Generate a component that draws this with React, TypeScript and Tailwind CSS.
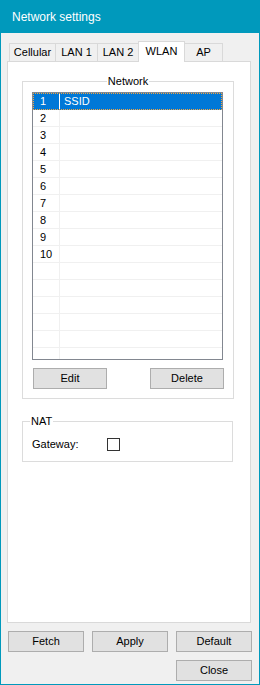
import React from "react";

const rows = ["1", "2", "3", "4", "5", "6", "7", "8", "9", "10", "", "", "", "", "", ""];

function Btn({ children, className = "" }: { children: React.ReactNode; className?: string }) {
  return (
    <div
      className={
        "h-[21px] w-[74px] bg-[#e1e1e1] border border-[#adadad] flex items-center justify-center leading-none " +
        className
      }
    >
      {children}
    </div>
  );
}

const tabs = [
  { label: "Cellular", w: "w-[47px]" },
  { label: "LAN 1", w: "w-[43px]" },
  { label: "LAN 2", w: "w-[42px]" },
  { label: "WLAN", w: "w-[47px]", sel: true },
  { label: "AP", w: "w-[39px]" },
];

export default function App() {
  return (
    <div className="w-[260px] h-[685px] bg-[#0099bc] flex flex-col font-['Liberation_Sans',Arial,sans-serif] text-[11px] text-black">
      <div className="h-[33px] shrink-0 flex items-center pl-[12px] text-white text-[12px]">Network settings</div>
      <div className="flex-1 mx-px mb-px bg-[#f0f0f0] flex flex-col pl-[6px] pt-[8px]">
        {/* tabs */}
        <div className="flex items-end h-[20px] ml-[2px] relative z-10">
          {tabs.map((t, i) =>
            t.sel ? (
              <div
                key={t.label}
                className={`${t.w} h-[21px] -mb-px bg-white border-t border-x border-[#d9d9d9] flex items-center justify-center pb-[2px] relative z-10 ${i > 0 ? "-ml-px" : ""}`}
              >
                {t.label}
              </div>
            ) : (
              <div
                key={t.label}
                className={`${t.w} h-[18px] bg-[#f0f0f0] border-t border-x border-[#d9d9d9] flex items-center justify-center ${i > 0 ? "-ml-px" : ""}`}
              >
                {t.label}
              </div>
            )
          )}
        </div>
        {/* panel */}
        <div className="w-[244px] h-[562px] border border-[#d9d9d9] bg-white pl-[14px] pt-[13px]">
          <fieldset className="w-[212px] border border-[#dcdcdc] px-[9px] pt-[5px] pb-[9px]">
            <legend className="mx-auto px-[1px] leading-[12px]">Network</legend>
            <div className="w-[191px] h-[268px] border border-[#828790] overflow-hidden bg-white">
              {rows.map((r, i) =>
                i === 0 ? (
                  <div key={i} className="relative flex h-[17px] bg-[#0078d7] text-white">
                    <div className="w-[26px] pl-[7px] flex items-center">1</div>
                    <div className="flex-1 border-l border-white pl-[4px] flex items-center">SSID</div>
                    <div className="absolute inset-0 border border-dotted border-[#f7a43c]" />
                  </div>
                ) : (
                  <div key={i} className="flex h-[17px] border-b border-[#f0f0f0]">
                    <div className="w-[26px] pl-[7px] flex items-center">{r}</div>
                    <div className="flex-1 border-l border-[#f0f0f0]" />
                  </div>
                )
              )}
            </div>
            <div className="flex justify-between mt-[8px] pl-[1px]">
              <Btn>Edit</Btn>
              <Btn>Delete</Btn>
            </div>
          </fieldset>
          <fieldset className="w-[211px] mt-[16px] border border-[#dcdcdc] px-[9px] pt-[11px] pb-[10px]">
            <legend className="-ml-[2px] px-[1px] leading-[12px]">NAT</legend>
            <div className="flex items-center h-[13px]">
              <div className="w-[75px]">Gateway:</div>
              <div className="w-[13px] h-[13px] border border-[#333333] bg-white" />
            </div>
          </fieldset>
        </div>
        {/* bottom buttons */}
        <div className="flex gap-[8px] mt-[8px] ml-[1px]">
          <Btn className="w-[76px]">Fetch</Btn>
          <Btn className="w-[76px]">Apply</Btn>
          <Btn className="w-[76px]">Default</Btn>
        </div>
        <div className="flex mt-[8px] ml-[169px]">
          <Btn className="w-[76px]">Close</Btn>
        </div>
      </div>
    </div>
  );
}
